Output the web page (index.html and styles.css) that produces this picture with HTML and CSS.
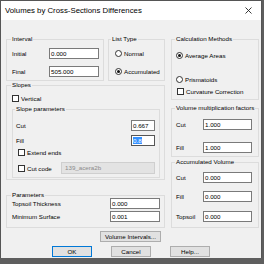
FILE: index.html
```html
<!DOCTYPE html>
<html lang="en">

<head>
  <meta charset="UTF-8">
  <meta name="viewport" content="width=device-width, initial-scale=1.0">
  <title>Volumes by Cross-Sections Differences</title>
  <link rel="stylesheet" href="styles.css">
</head>

<body>
  <div class="dialog">
    <div class="titlebar">
      <span class="title">Volumes by Cross-Sections Differences</span>
      <svg class="close" width="7" height="7" viewBox="0 0 7 7">
        <path d="M0.5 0.5 L6.5 6.5 M6.5 0.5 L0.5 6.5" stroke="#222" stroke-width="0.9" fill="none" />
      </svg>
    </div>

    <div class="content">
      <div class="col-left">
        <div class="row-top">
          <fieldset class="group interval">
            <legend>Interval</legend>
            <div class="field first"><span class="lbl">Initial</span><div class="edit">0.000</div></div>
            <div class="field second"><span class="lbl">Final</span><div class="edit">505.000</div></div>
          </fieldset>
          <fieldset class="group listtype">
            <legend>List Type</legend>
            <div class="opt first"><span class="radio"></span>Normal</div>
            <div class="opt second"><span class="radio on"></span>Accumulated</div>
          </fieldset>
        </div>

        <fieldset class="group slopes">
          <legend>Slopes</legend>
          <div class="opt vertical"><span class="check"></span>Vertical</div>
          <fieldset class="group slope-params">
            <legend>Slope parameters</legend>
            <div class="field sp-cut"><span class="lbl">Cut</span><div class="edit small">0.667</div></div>
            <div class="field sp-fill"><span class="lbl">Fill</span><div class="edit small focus"><span class="sel">0.8</span></div></div>
            <div class="opt extend"><span class="check"></span>Extend ends</div>
            <div class="opt cutcode"><span class="check"></span><span class="cc-lbl">Cut code</span><div class="combo">139_acera2b</div></div>
          </fieldset>
        </fieldset>

        <fieldset class="group params">
          <legend>Parameters</legend>
          <div class="field p-top"><span class="lbl">Topsoil Thickness</span><div class="edit">0.000</div></div>
          <div class="field p-min"><span class="lbl">Minimum Surface</span><div class="edit">0.001</div></div>
        </fieldset>

        <button class="btn intervals">Volume Intervals...</button>
      </div>

      <div class="col-right">
        <fieldset class="group calc">
          <legend>Calculation Methods</legend>
          <div class="opt avg"><span class="radio on"></span>Average Areas</div>
          <div class="opt prism"><span class="radio"></span>Prismatoids</div>
          <div class="opt curv"><span class="check"></span>Curvature Correction</div>
        </fieldset>

        <fieldset class="group mult">
          <legend>Volume multiplication factors</legend>
          <div class="field m-cut"><span class="lbl">Cut</span><div class="edit">1.000</div></div>
          <div class="field m-fill"><span class="lbl">Fill</span><div class="edit">1.000</div></div>
        </fieldset>

        <fieldset class="group accum">
          <legend>Accumulated Volume</legend>
          <div class="field a-cut"><span class="lbl">Cut</span><div class="edit">0.000</div></div>
          <div class="field a-fill"><span class="lbl">Fill</span><div class="edit">0.000</div></div>
          <div class="field a-top"><span class="lbl">Topsoil</span><div class="edit">0.000</div></div>
        </fieldset>
      </div>
    </div>

    <div class="actions">
      <button class="btn default">OK</button>
      <button class="btn">Cancel</button>
      <button class="btn">Help...</button>
    </div>
  </div>
</body>

</html>
```

FILE: styles.css
```css
* {
  padding: 0;
  margin: 0;
  box-sizing: border-box;
}

body {
  background-color: #5e5e5e;
  font-family: "Liberation Sans", Arial, sans-serif;
  font-size: 6.2px;
  color: #000;
}

.dialog {
  width: 262px;
  height: 258px;
  background-color: #f0f0f0;
  border-left: 1px solid #555;
  border-top: 1px solid #555;
  border-right: 1px solid #555;
  display: flex;
  flex-direction: column;
  overflow: hidden;
}

/* title bar */
.titlebar {
  height: 19px;
  flex-shrink: 0;
  background-color: #fff;
  display: flex;
  align-items: center;
  justify-content: space-between;
  padding: 0 9px 0 4px;
}

.title {
  font-size: 7.8px;
}

.content {
  display: flex;
  padding: 15px 0 0 5px;
  gap: 6px;
}

.col-left {
  width: 159px;
  display: flex;
  flex-direction: column;
}

.col-right {
  width: 88px;
  display: flex;
  flex-direction: column;
}

.row-top {
  display: flex;
  gap: 4px;
}

/* group boxes */
.group {
  border: 1px solid #dcdcdc;
  min-width: 0;
  padding: 0 0 3px 5px;
}

.group legend {
  line-height: 8px;
  padding: 0 1px;
  margin-left: -1px;
}

.interval {
  width: 98px;
}

.listtype {
  width: 57px;
  padding-left: 3px;
}

.slopes {
  padding-bottom: 1px;
  padding-right: 4px;
}

.slope-params {
  margin-top: 3px;
  padding-left: 3px;
  padding-right: 4px;
}

.params {
  margin-top: 11px;
  padding-bottom: 5px;
}

.calc {
  padding-left: 4px;
  padding-bottom: 4px;
}

.mult {
  margin-top: 4px;
  padding-left: 4px;
}

.accum {
  margin-top: 1px;
  padding-left: 4px;
  padding-bottom: 5px;
}

/* rows */
.field {
  display: flex;
  align-items: center;
  height: 11px;
}

.lbl {
  width: 37px;
}

.edit {
  width: 50px;
  height: 11px;
  background-color: #fff;
  border: 1px solid #7a7a7a;
  padding: 0 1px;
  line-height: 9px;
}

.edit.small {
  width: 24px;
  margin-left: auto;
}

.edit.focus {
  border-color: #555;
}

.sel {
  background-color: #3390ff;
  color: #fff;
}

.opt {
  display: flex;
  align-items: center;
  height: 8px;
}

.radio {
  width: 7px;
  height: 7px;
  border: 1px solid #333;
  border-radius: 50%;
  background-color: #fff;
  margin-right: 2px;
  display: flex;
  align-items: center;
  justify-content: center;
}

.radio.on::after {
  content: "";
  width: 3px;
  height: 3px;
  border-radius: 50%;
  background-color: #111;
}

.check {
  width: 7px;
  height: 7px;
  border: 1px solid #333;
  background-color: #fff;
  margin-right: 2px;
}

.interval .first { margin-top: 5px; }
.interval .second { margin-top: 7px; }
.listtype .first { margin-top: 6px; margin-left: 3px; }
.listtype .second { margin-top: 10px; margin-left: 3px; }

.vertical { margin-top: 5px; }
.sp-cut { margin-top: 7px; }
.sp-fill { margin-top: 4px; }
.extend { margin-top: 2px; margin-left: 2px; }
.cutcode { margin-top: 6px; margin-left: 2px; height: 12px; }

.cc-lbl {
  width: 34px;
}

.combo {
  flex: 1;
  height: 12px;
  background-color: #e3e3e3;
  border: 1px solid #cfcfcf;
  color: #8a8a8a;
  padding-left: 3px;
  line-height: 10px;
}

.p-top { margin-top: -1px; }
.p-min { margin-top: 2px; }
.params .lbl { width: 98px; }

.avg { margin-top: 8px; }
.prism { margin-top: 16px; }
.curv { margin-top: 4px; margin-left: 1px; }

.col-right .lbl { width: 27px; }
.col-right .edit { width: 49px; }
.m-cut { margin-top: 7px; }
.m-fill { margin-top: 12px; }
.a-cut { margin-top: 6px; }
.a-fill { margin-top: 8px; }
.a-top { margin-top: 9px; }

/* buttons */
.btn {
  font-family: inherit;
  font-size: 6.2px;
  width: 40px;
  height: 11px;
  background-color: #e1e1e1;
  border: 1px solid #adadad;
  color: #000;
}

.btn.default {
  border-color: #0078d7;
}

.intervals {
  width: 61px;
  margin-top: 3px;
  margin-left: 94px;
}

.actions {
  display: flex;
  justify-content: center;
  gap: 19px;
  margin-top: 4px;
}
```
